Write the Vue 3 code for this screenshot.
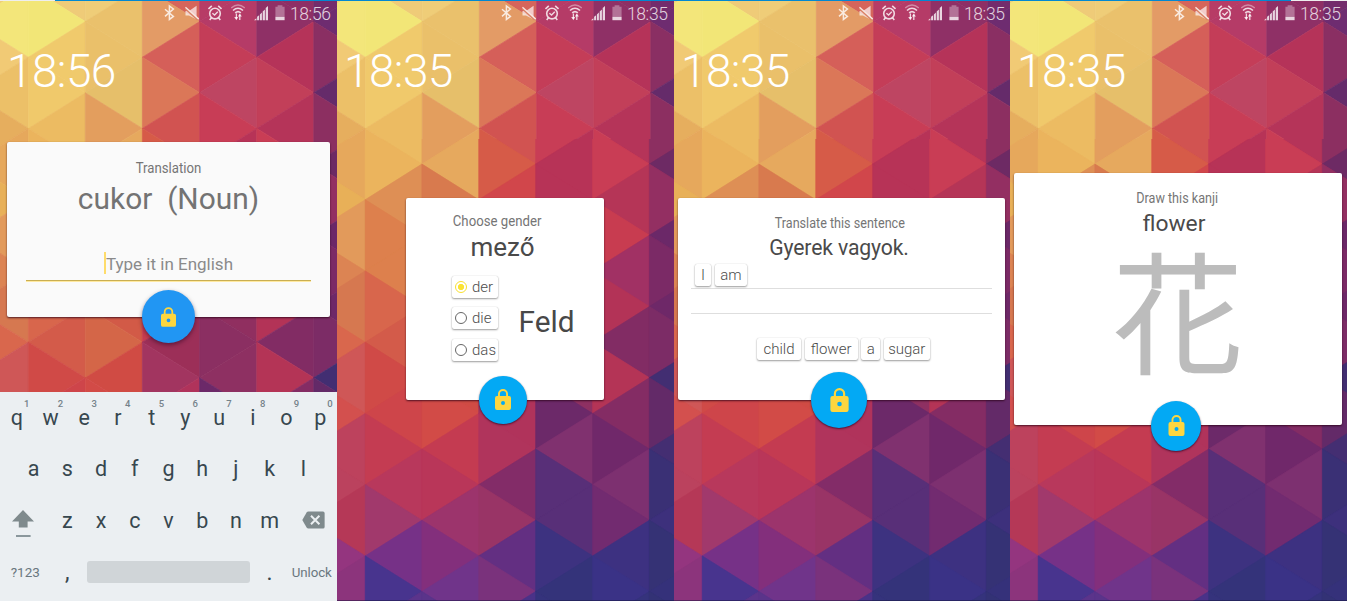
<script setup>
const xs = [-28.6, 28.4, 85.3, 142.4, 199.6, 256.8, 313.8, 371]
const strips = [
  'f0d076 f3e67a f1ca75 ecc068 e6ae5e e6a85c e8b058 e29a5b dc8453 d67850 d9674d cf5757 d3504e bd425d bb425e b53857 94357f 8c347c 8c347c',
  'efcb78 f2e677 f0ca6c f0c96b ecbb62 ebb45d de8f55 dd804d dd804d d8664c d35b4a d04a47 ce454a c43c52 b8385c a1396c 763187 48348e 5b348b',
  'efcd78 eac16c eac06a e6bf6a e39e5e e6a95e d87a4e dc7a4d d8704b d25a47 d46648 d04b44 d24b47 c43b51 b93659 9c346c 832f7c 70348a 5a348a',
  'd5655b e39b66 d55f59 db7758 d15351 d65b48 d1464b d04850 cc4050 c83d50 9c2f58 a23560 b0335b b0345c 832c68 993466 632f82 7a327c 4a3288',
  'b73c66 b53b67 c43d58 be4562 c83d56 b73357 b73357 b03358 a03060 902f60 8b2f62 8e3062 6c2969 80316f 582f78 582f78 3d3280 34337a 35337c',
  '8e2f65 8f3066 b53359 c23f59 b53459 c93d55 b53557 c83c50 a13164 b33357 822c64 b43456 842c64 70286a 7d3070 722b70 3d3181 3a3286 35337c',
  '742c6c 6e2c70 8a2f63 652b6a 8c2f61 6d2a64 932f62 6b2868 7b2a66 6e2868 7c2c66 422e72 632a68 442e72 3a3075 3d307c 353275 35317a 333275'
].map((s) => s.split(' '))

const H = 35.62
const triangles = strips.flatMap((colors, i) =>
  colors.map((c, j) => {
    const n = j - 1
    const y = 21.6 + H * n
    const apexRight = (i + n) % 2 !== 0
    const edge = apexRight ? xs[i] : xs[i + 1]
    const apex = apexRight ? xs[i + 1] : xs[i]
    return { points: `${edge},${y - H} ${apex},${y} ${edge},${y + H}`, color: '#' + c }
  })
)

const panels = [
  { kind: 'type', time: '18:56' },
  { kind: 'gender', time: '18:35' },
  { kind: 'sentence', time: '18:35' },
  { kind: 'kanji', time: '18:35' }
]
const articles = ['der', 'die', 'das']
const topRow = 'qwertyuiop'.split('').map((k, i) => ({ k, n: (i + 1) % 10 }))
const midRow = 'asdfghjkl'.split('')
const lowRow = 'zxcvbnm'.split('')
</script>

<template>
  <div class="board">
    <section v-for="(p, i) in panels" :key="i" class="panel" :class="p.kind">
      <svg class="wall" width="337" height="601" viewBox="0 0 337 601">
        <g>
          <polygon v-for="(t, k) in triangles" :key="k" :points="t.points" :fill="t.color" :stroke="t.color" stroke-width="0.7" />
        </g>
      </svg>
      <svg v-if="i" class="wall lower" width="337" height="601" viewBox="0 0 337 601">
        <g transform="scale(0.9955 1)">
          <polygon v-for="(t, k) in triangles" :key="k" :points="t.points" :fill="t.color" :stroke="t.color" stroke-width="0.7" />
        </g>
      </svg>

      <header class="status">
        <svg class="ic" width="14" height="18" viewBox="0 0 14 18">
          <path d="M3 5.2 L11.4 12.4 L7.4 15.4 V2 L11.4 5 L3 12.4" fill="none" stroke="currentColor" stroke-width="1.5" />
        </svg>
        <svg class="ic" width="14" height="18" viewBox="0 0 14 18">
          <path d="M0.5 7 H4 L11.6 1.8 V15.6 L4 11.4 H0.5 Z" fill="currentColor" opacity=".85" />
          <path d="M0.6 4.4 L13 15.6" stroke="#d98063" stroke-width="2.6" />
          <path d="M0.4 3.2 L13.8 15.2" stroke="currentColor" stroke-width="1.5" />
        </svg>
        <svg class="ic" width="14" height="18" viewBox="0 0 14 18">
          <circle cx="7" cy="9.6" r="5.3" fill="none" stroke="currentColor" stroke-width="1.6" />
          <path d="M0.5 5 L3.8 1.9 M13.5 5 L10.2 1.9 M3.4 13.8 L1.7 15.9 M10.6 13.8 L12.3 15.9" stroke="currentColor" stroke-width="1.6" />
          <path d="M4.4 9.2 L6.6 11.1 L9.8 7.8" fill="none" stroke="currentColor" stroke-width="1.4" />
        </svg>
        <svg class="ic" width="14" height="18" viewBox="0 0 14 18">
          <path d="M0.2 4 Q7 -2 13.8 4" fill="none" stroke="currentColor" stroke-width="1.3" opacity=".5" />
          <path d="M2 6.5 Q7 2 12 6.5 M4.2 8.9 Q7 6.3 9.8 8.9" fill="none" stroke="currentColor" stroke-width="1.6" />
          <path d="M5.4 9.6 V15 M8.8 16 V10.6" stroke="currentColor" stroke-width="1.3" />
          <path d="M3.2 13 H7.2 L5.4 16.2 Z M6.9 12.6 H10.9 L8.8 9.6 Z" fill="currentColor" />
        </svg>
        <svg class="ic" width="14" height="18" viewBox="0 0 14 18">
          <path d="M0 16.2 L2.4 14.2 V16.2 Z M3.1 16.2 V12.8 L5.1 11.2 V16.2 Z M5.9 16.2 V10.4 L7.9 8.6 V16.2 Z M8.7 16.2 V7.4 L10.9 5.4 V16.2 Z M11.7 16.2 V4 L14 2 V16.2 Z" fill="currentColor" />
        </svg>
        <svg class="ic batt" width="10" height="18" viewBox="0 0 10 18">
          <path d="M2.6 1.2 H7.4 V2.8 H9.6 V12.8 H0.4 V2.8 H2.6 Z" fill="currentColor" opacity=".4" />
          <rect x="0.4" y="12.8" width="9.2" height="3.4" fill="currentColor" />
        </svg>
        <span class="stime">{{ p.time }}</span>
      </header>
      <div class="clock">{{ p.time }}</div>

      <article class="card">
        <template v-if="p.kind === 'type'">
          <h3 class="label">Translation</h3>
          <h2 class="word">cukor&nbsp; (Noun)</h2>
          <div class="field"><i class="caret"></i><span>Type it in English</span></div>
        </template>

        <template v-else-if="p.kind === 'gender'">
          <h3 class="label">Choose gender</h3>
          <h2 class="word">mező</h2>
          <div class="choice">
            <div class="radios">
              <div v-for="(a, k) in articles" :key="a" class="chip radio" :class="{ on: k === 0 }">
                <i class="dot"></i><span>{{ a }}</span>
              </div>
            </div>
            <strong class="noun">Feld</strong>
          </div>
        </template>

        <template v-else-if="p.kind === 'sentence'">
          <h3 class="label">Translate this sentence</h3>
          <h2 class="word">Gyerek vagyok.</h2>
          <div class="slot">
            <span class="chip w-i">I</span><span class="chip w-am">am</span>
          </div>
          <div class="slot"></div>
          <div class="bank">
            <span class="chip w-child">child</span><span class="chip w-flower">flower</span><span class="chip w-a">a</span><span class="chip w-sugar">sugar</span>
          </div>
        </template>

        <template v-else>
          <h3 class="label">Draw this kanji</h3>
          <h2 class="word">flower</h2>
          <div class="kanji-char">花</div>
        </template>

        <button class="fab">
          <svg viewBox="0 0 16 21">
            <path d="M8 0 A5 5 0 0 0 3 5 V7 H2 A2 2 0 0 0 0 9 V19 A2 2 0 0 0 2 21 H14 A2 2 0 0 0 16 19 V9 A2 2 0 0 0 14 7 H13 V5 A5 5 0 0 0 8 0 Z M8 1.9 A3.1 3.1 0 0 1 11.1 5 V7 H4.9 V5 A3.1 3.1 0 0 1 8 1.9 Z M8 12 A2 2 0 1 1 8 16 A2 2 0 1 1 8 12 Z" fill="#fdd63f" fill-rule="evenodd" />
          </svg>
        </button>
      </article>

      <div v-if="p.kind === 'type'" class="kbd">
        <div class="row">
          <span v-for="t in topRow" :key="t.k" class="key">{{ t.k }}<sup>{{ t.n }}</sup></span>
        </div>
        <div class="row mid">
          <span v-for="k in midRow" :key="k" class="key">{{ k }}</span>
        </div>
        <div class="row">
          <span class="key wide shift">
            <svg width="22" height="28" viewBox="0 0 22 28">
              <path d="M11 0 L22 11.6 H15.6 V17.4 H6.8 V11.6 H0 Z" fill="#7f8a8d" />
              <rect x="4" y="25" width="14.6" height="2" fill="#8a979c" />
            </svg>
          </span>
          <span v-for="k in lowRow" :key="k" class="key">{{ k }}</span>
          <span class="key wide back">
            <svg width="23" height="18" viewBox="0 0 23 18">
              <path d="M6.4 0.4 H21 Q22.6 0.4 22.6 2 V16 Q22.6 17.6 21 17.6 H6.4 Q5.2 17.6 4.6 16.6 L0.3 9 L4.6 1.4 Q5.2 0.4 6.4 0.4 Z" fill="#7f8a8d" />
              <path d="M9 4.8 L17.4 13.2 M17.4 4.8 L9 13.2" stroke="#ebeff2" stroke-width="2" />
            </svg>
          </span>
        </div>
        <div class="row">
          <span class="key wide small">?123</span>
          <span class="key punct">,</span>
          <span class="space"></span>
          <span class="key punct">.</span>
          <span class="key wide small unlock">Unlock</span>
        </div>
      </div>
    </section>
  </div>
</template>

<style>
body { background: #fff; overflow: hidden; }
</style>

<style scoped>
.board {
  position: relative;
  display: grid;
  grid-template-columns: 337px 337px 336px 337px;
  width: 1347px;
  height: 601px;
  font-family: Roboto, "Noto Sans", sans-serif;
}
.board::before {
  content: "";
  position: absolute;
  z-index: 3;
  inset: 0 0 auto 0;
  height: 1px;
  background: linear-gradient(90deg, #eee 55px, #0288d1 55px, #0288d1 1291px, #eee 1291px);
}
.board::after {
  content: "";
  position: absolute;
  z-index: 3;
  inset: auto 0 0 337px;
  height: 1px;
  background: rgba(20, 20, 60, .45);
}
.panel {
  position: relative;
  height: 601px;
  overflow: hidden;
  display: flex;
  flex-direction: column;
}
.wall { position: absolute; left: 0; top: 0; }
.lower { clip-path: inset(139px 0 0 0); }
.status {
  position: relative;
  display: flex;
  gap: 9px;
  box-sizing: border-box;
  height: 24px;
  padding: 4px 0 0 162px;
  color: rgba(255, 255, 255, .8);
}
.ic { flex: none; }
.batt { margin-left: -2px; }
.stime { font-size: 17.5px; line-height: 20px; margin-left: -4px; letter-spacing: -.4px; white-space: nowrap; font-weight: 300; }
.clock {
  position: relative;
  height: 54px;
  margin: 16px 0 0 7px;
  font-size: 46px;
  line-height: 62px;
  font-weight: 300;
  color: #fff;
  letter-spacing: -.6px;
}
.card {
  position: relative;
  flex: none;
  box-sizing: border-box;
  display: flex;
  flex-direction: column;
  background: #fff;
  border-radius: 2px;
  box-shadow: 0 1px 2px rgba(40, 0, 20, .75);
}
.label, .word { margin: 0; text-align: center; white-space: nowrap; font-weight: 400; }
.label { font-size: 15px; line-height: 24px; height: 24px; color: #757575; transform: scaleX(.88); }
.word { color: #4a4a4a; }
.fab {
  position: absolute;
  border: 0;
  padding: 0;
  border-radius: 50%;
  background: #03a9f4;
  box-shadow: 0 1px 2px rgba(40, 0, 30, .7);
  display: grid;
  place-items: center;
}
.fab svg { display: block; }

.type .card { width: 323px; height: 175px; margin: 48px 0 0 7px; padding-top: 14px; background: #fafafa; }
.type .word { margin-top: 2px; font-size: 29.9px; line-height: 34px; color: #737373; }
.field {
  display: flex;
  align-items: center;
  justify-content: center;
  height: 31px;
  margin: 33px 19px 0;
  border-bottom: 1px solid #c9ae52;
  box-shadow: 0 1px 0 #ffe9a0;
  font-size: 17px;
  line-height: 28px;
  color: #8a8a8a;
  white-space: nowrap;
}
.field span { padding-bottom: 2px; }
.caret { width: 2px; height: 22px; margin-bottom: 3px; background: #fedc6b; }
.type .fab { width: 53px; height: 53px; left: 135px; top: 148px; background: #2196f3; box-shadow: 0 2px 4px rgba(40, 0, 30, .5); }
.type .fab svg { width: 15px; height: 20px; }

.gender .card { width: 198px; height: 202px; margin: 104px 0 0 69px; padding-top: 11px; }
.gender .label { padding-right: 18px; }
.gender .word { font-size: 26px; line-height: 28px; padding-right: 5px; }
.choice { display: flex; align-items: center; margin: 15px 0 0 46px; }
.radios { display: flex; flex-direction: column; gap: 9.3px; }
.chip {
  box-sizing: border-box;
  display: flex;
  align-items: center;
  justify-content: center;
  height: 22px;
  border-radius: 2px;
  background: #fff;
  box-shadow: 0 1px 2px rgba(0, 0, 0, .38), 0 0 1px rgba(0, 0, 0, .2);
  font-size: 15px;
  font-weight: 300;
  color: #4c4c4c;
  white-space: nowrap;
}
.radio { width: 46px; justify-content: flex-start; padding-left: 3px; gap: 5px; }
.dot { box-sizing: border-box; flex: none; width: 12px; height: 12px; border: 1.4px solid #666; border-radius: 50%; }
.on .dot { border-color: #f9e02f; background: radial-gradient(circle, #fbe233 2.8px, #fff 3.4px); }
.noun { margin: 7px 0 0 20.5px; font-size: 29.8px; line-height: 30px; font-weight: 400; color: #484848; }
.gender .fab { width: 48px; height: 48px; left: 72.5px; top: 177.5px; }
.gender .fab svg { width: 16px; height: 21px; }

.sentence .card { width: 327px; height: 202px; margin: 104px 0 0 4px; padding-top: 13px; }
.sentence .label { transform: scaleX(.84); padding-right: 4px; }
.sentence .word { margin-top: -1.5px; font-size: 21.2px; letter-spacing: -.15px; line-height: 28px; padding-right: 5px; }
.slot { display: flex; align-items: flex-start; gap: 4px; box-sizing: border-box; height: 25.5px; margin: 0 13px; padding-left: 4px; border-bottom: 1px solid #dedede; }
.word + .slot { height: 27px; padding-top: 2px; }
.w-i { width: 16px; }
.w-am { width: 32px; }
.bank { display: flex; gap: 3.6px; margin: 24px 0 0 79px; }
.w-child { width: 44px; }
.w-flower { width: 53px; }
.w-a { width: 19px; }
.w-sugar { width: 46px; }
.sentence .fab { width: 56px; height: 56px; left: 133px; top: 174px; }
.sentence .fab svg { width: 19px; height: 24px; }

.kanji .card { width: 328px; height: 252px; margin: 79px 0 0 4px; padding-top: 13px; }
.kanji .label { padding-right: 2px; transform: scaleX(.84); }
.kanji .word { font-size: 22.8px; line-height: 28px; padding-right: 8px; }
.kanji-char {
  margin: 3px 0 0;
  text-align: center;
  font-family: "Noto Sans CJK JP", sans-serif;
  font-size: 132px;
  line-height: 132px;
  color: #bcbcbc;
}
.kanji .fab { width: 50px; height: 50px; left: 137px; top: 227.5px; }
.kanji .fab svg { width: 17px; height: 21px; }

.kbd {
  position: absolute;
  left: 0;
  right: 0;
  top: 391.5px;
  bottom: 0;
  background: #ebeff2;
  color: #37474f;
}
.row { display: flex; height: 51.6px; align-items: center; }
.mid { padding: 0 16.85px; }
.key { position: relative; flex: 33.7 1 0; min-width: 0; text-align: center; font-size: 21.5px; line-height: 51px; }
.key sup { position: absolute; left: 24px; top: 6px; font-size: 9.5px; line-height: 12px; color: #75828a; font-weight: 500; }
.wide { flex-grow: 50.5; }
.shift svg, .back svg { display: block; margin: 0 auto; }
.shift svg { position: relative; top: 4px; left: -2px; }
.back svg { position: relative; left: 2px; }
.small { font-size: 13.5px; color: #6a777e; }
.unlock { font-size: 13.3px; letter-spacing: -.1px; }
.punct { font-size: 23px; }
.space { flex: 162.5 1 0; margin: 0 3px; height: 22px; border-radius: 3px; background: #d0d5d8; }
</style>
